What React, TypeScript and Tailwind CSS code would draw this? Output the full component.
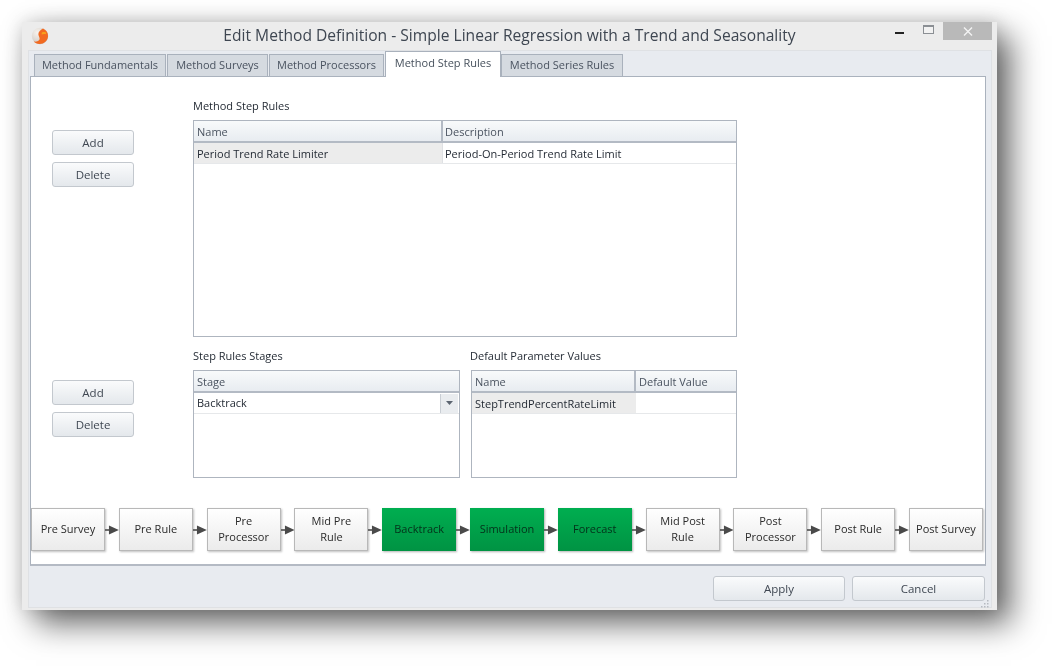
import React from 'react';

const tabs = [
  { label: 'Method Fundamentals', width: 'w-[132px]' },
  { label: 'Method Surveys', width: 'w-[101px]' },
  { label: 'Method Processors', width: 'w-[115px]' },
  { label: 'Method Step Rules', width: 'w-[116px] -mr-[1px]', active: true },
  { label: 'Method Series Rules', width: 'w-[122px]' },
];

const stages = [
  { label: ['Pre Survey'] },
  { label: ['Pre Rule'] },
  { label: ['Pre', 'Processor'] },
  { label: ['Mid Pre', 'Rule'] },
  { label: ['Backtrack'], on: true },
  { label: ['Simulation'], on: true },
  { label: ['Forecast'], on: true },
  { label: ['Mid Post', 'Rule'] },
  { label: ['Post', 'Processor'] },
  { label: ['Post Rule'] },
  { label: ['Post Survey'] },
];

const Logo = () => (
  <svg width="18" height="18" viewBox="0 0 18 18">
    <defs>
      <radialGradient id="ball" cx="35%" cy="30%" r="80%">
        <stop offset="0%" stopColor="#f7f3ef" />
        <stop offset="60%" stopColor="#dcd6d0" />
        <stop offset="100%" stopColor="#b9aea6" />
      </radialGradient>
    </defs>
    <circle cx="9" cy="9" r="8.2" fill="url(#ball)" />
    <path d="M12 1.5C15.5 3 17.3 6 17 9.5C16.6 13.8 13 17 8.5 17C6 17 4 16 2.8 14.6C5.5 15 8 14.2 8.6 12.2C9 10.6 7.6 9.4 7.4 7.6C7.1 5 9.2 3 12 1.5Z" fill="#f26a21" />
    <path d="M10.8 5.4C12.6 4.8 14.6 4.9 15.4 5.6L14.8 7.2C13.4 6.8 12 7 10.6 7.6Z" fill="#f7a11a" />
  </svg>
);

const Arrow = () => (
  <svg className="w-[13.8px] h-[12px] shrink-0" viewBox="0 0 14 12">
    <path d="M0 6H7" stroke="#4a4a4a" strokeWidth="1.6" />
    <path d="M4 1.5L14 6L4 10.5Z" fill="#4a4a4a" />
  </svg>
);

const ActionButton = ({ label, className }: { label: string; className: string }) => (
  <button className={`${className} rounded-[3px] border border-[#c3c8ce] bg-gradient-to-b from-[#fafbfc] to-[#e4e8ec] text-[#3f4752] text-[11.5px]`}>
    {label}
  </button>
);

const SideButtons = () => (
  <div className="flex flex-col gap-[7px] w-[82px]">
    <ActionButton label="Add" className="h-[25px]" />
    <ActionButton label="Delete" className="h-[25px]" />
  </div>
);

const HeaderCell = ({ label, className }: { label: string; className: string }) => (
  <div className={`${className} h-[22px] pl-[3px] pt-[2px] flex items-center bg-gradient-to-b from-[#f8fafb] to-[#e8ecf1] border-b-2 border-[#b3bac4] text-[#4a5360] text-[11px]`}>
    {label}
  </div>
);

export default function App() {
  return (
    <div className="w-[1052px] h-[666px] bg-white pt-[22px] pl-[22px] overflow-hidden font-['Open_Sans',sans-serif] text-[11px] blur-[0.35px]">
      <div className="relative w-[975px] h-[588px] bg-[#ececec] flex flex-col shadow-[14px_14px_30px_rgba(0,0,0,0.58),0_0_18px_rgba(0,0,0,0.16)]">
        {/* title bar */}
        <div className="h-[28px] shrink-0 flex items-center relative">
          <div className="ml-[9px] mt-[-1px]">
            <Logo />
          </div>
          <div className="absolute left-0 top-[2px] w-full text-center text-[15.6px] leading-[22px] text-[#3e4651]">
            Edit Method Definition - Simple Linear Regression with a Trend and Seasonality
          </div>
          <div className="absolute right-[5px] top-0 flex items-start">
            <div className="w-[9px] h-[2px] bg-[#222] mt-[10px] mr-[19px]" />
            <div className="w-[11px] h-[9px] border border-[#8b8f94] border-t-2 bg-[#f2f2f2] mt-[3px] mr-[9px]" />
            <div className="w-[49px] h-[18px] bg-[#b9b9b9] flex items-center justify-center">
              <svg width="10" height="9" viewBox="0 0 10 9">
                <path d="M1 0.5L9 8.5M9 0.5L1 8.5" stroke="#f4f4f4" strokeWidth="1.4" />
              </svg>
            </div>
          </div>
        </div>

        {/* inner frame */}
        <div className="ml-[6px] w-[964px] h-[558px] bg-[#e8ebf0] border border-[#dfe1e4] flex flex-col">
          {/* tab strip */}
          <div className="h-[25px] shrink-0 pl-[5px] flex items-end gap-[1px] pr-[6px]">
            {tabs.map((tab) => (
              <div
                key={tab.label}
                className={
                  tab.active
                    ? `${tab.width} -mb-[1px] z-10 h-[26px] pb-[2px] flex items-center justify-center bg-white border border-b-0 border-[#a9b1bc] text-[#46505c] text-[11px]`
                    : `${tab.width} h-[22px] flex items-center justify-center bg-[#d5dae0] border border-b-0 border-[#a9b1bc] text-[#4a5360] text-[11px]`
                }
              >
                {tab.label}
              </div>
            ))}
          </div>

          {/* tab page */}
          <div className="ml-[1px] w-[956px] h-[490px] shrink-0 bg-white border border-[#aab2bd] border-b-2 border-b-[#b4bac4] flex flex-col">
            <div className="flex h-[272px] shrink-0">
              <div className="w-[162px] shrink-0 pl-[21px] pt-[53px]">
                <SideButtons />
              </div>
              <div className="pt-[21px]">
                <div className="h-[22px] text-[#1f2630] text-[11px] leading-[15px]">Method Step Rules</div>
                <div className="w-[544px] h-[217px] border border-[#aeb5bf]">
                  <div className="flex">
                    <HeaderCell label="Name" className="w-[249px] border-r-2" />
                    <HeaderCell label="Description" className="flex-1 !pl-[2px]" />
                  </div>
                  <div className="flex h-[21px] border-b border-[#e6e8ea] text-[#1f2630] text-[11px] leading-[21px]">
                    <div className="w-[249px] pl-[3px] bg-[#ececec] border-r border-[#dfe1e4]">Period Trend Rate Limiter</div>
                    <div className="pl-[2px]">Period-On-Period Trend Rate Limit</div>
                  </div>
                </div>
              </div>
            </div>

            <div className="flex h-[159px] shrink-0">
              <div className="w-[162px] shrink-0 pl-[21px] pt-[31px]">
                <SideButtons />
              </div>
              <div className="flex gap-[11px]">
                <div>
                  <div className="h-[21px] text-[#1f2630] text-[11px] leading-[14px]">Step Rules Stages</div>
                  <div className="w-[267px] h-[108px] border border-[#aeb5bf]">
                    <HeaderCell label="Stage" className="w-full" />
                    <div className="flex items-center justify-between h-[21px] pl-[3px] pr-[1px] border-b border-[#e6e8ea] text-[#1f2630] text-[11px]">
                      <span className="pt-[1px]">Backtrack</span>
                      <div className="w-[18px] h-[19px] bg-[#e9ecef] border-l border-[#c9ced4] flex items-center justify-center">
                        <svg width="7" height="4" viewBox="0 0 7 4">
                          <path d="M0 0H7L3.5 4Z" fill="#5b6470" />
                        </svg>
                      </div>
                    </div>
                  </div>
                </div>
                <div>
                  <div className="h-[21px] -ml-[1px] text-[#1f2630] text-[11px] leading-[14px]">Default Parameter Values</div>
                  <div className="w-[266px] h-[108px] border border-[#aeb5bf]">
                    <div className="flex">
                      <HeaderCell label="Name" className="w-[164px] border-r-2" />
                      <HeaderCell label="Default Value" className="flex-1" />
                    </div>
                    <div className="flex h-[21px] border-b border-[#e6e8ea] text-[#1f2630] text-[11px] leading-[21px]">
                      <div className="w-[164px] pl-[3px] bg-[#ececec]">StepTrendPercentRateLimit</div>
                    </div>
                  </div>
                </div>
              </div>
            </div>

            {/* stage flow */}
            <div className="flex items-center h-[43px]">
              {stages.map((stage, i) => (
                <React.Fragment key={stage.label.join(' ')}>
                  {i > 0 && <Arrow />}
                  <div
                    className={
                      stage.on
                        ? 'w-[74px] h-[43px] shrink-0 flex items-center justify-center text-center bg-gradient-to-b from-[#00ae50] to-[#009343] shadow-[1px_1px_2px_rgba(0,0,0,0.3)] text-[#04301a] text-[11px] leading-[16px]'
                        : 'w-[74px] h-[43px] shrink-0 flex items-center justify-center text-center bg-gradient-to-b from-white to-[#ebebeb] border border-[#b8b8b8] shadow-[1px_1px_2px_rgba(0,0,0,0.25)] text-[#2a2a2a] text-[11px] leading-[16px]'
                    }
                  >
                    <div className="-mt-[1px]">
                      {stage.label.map((line) => (
                        <div key={line}>{line}</div>
                      ))}
                    </div>
                  </div>
                </React.Fragment>
              ))}
            </div>
          </div>

          {/* footer */}
          <div className="flex-1 flex justify-end gap-[7px] pt-[10px] pr-[6px]">
            <ActionButton label="Apply" className="w-[132px] h-[25px]" />
            <ActionButton label="Cancel" className="w-[133px] h-[25px]" />
          </div>
        </div>

        {/* resize grip */}
        <svg className="absolute right-[8px] bottom-[2px]" width="9" height="9" viewBox="0 0 9 9">
          <path d="M7 1h1.5v1.5H7zM7 4h1.5v1.5H7zM7 7h1.5v1.5H7zM4 4h1.5v1.5H4zM4 7h1.5v1.5H4zM1 7h1.5v1.5H1z" fill="#b5bac0" />
        </svg>
      </div>
    </div>
  );
}
